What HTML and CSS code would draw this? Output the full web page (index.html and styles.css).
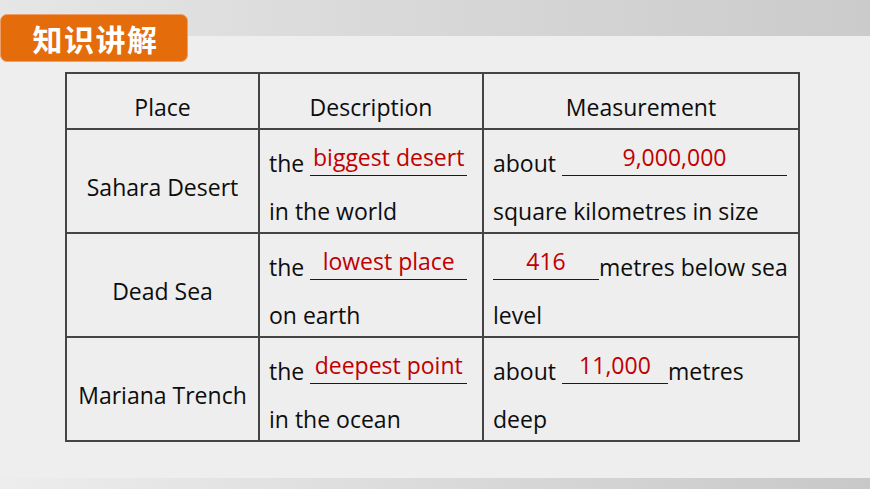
FILE: index.html
```html
<!DOCTYPE html>
<html lang="zh">
<head>
<meta charset="utf-8">
<title>知识讲解</title>
<link rel="stylesheet" href="styles.css">
</head>
<body>
<div class="page">
  <div class="topbar"></div>
  <div class="tab">知识讲解</div>
  <main class="content">
    <table class="grid">
      <colgroup>
        <col class="c1">
        <col class="c2">
        <col class="c3">
      </colgroup>
      <tr class="head">
        <th>Place</th>
        <th>Description</th>
        <th>Measurement</th>
      </tr>
      <tr class="row">
        <td class="place"><div class="cell">Sahara Desert</div></td>
        <td><div class="cell">the <span class="blank w-desc"><span class="ans">biggest desert</span></span><br>in the world</div></td>
        <td><div class="cell">about <span class="blank w-long"><span class="ans">9,000,000</span></span><br>square kilometres in size</div></td>
      </tr>
      <tr class="row">
        <td class="place"><div class="cell">Dead Sea</div></td>
        <td><div class="cell">the <span class="blank w-desc"><span class="ans">lowest place</span></span><br>on earth</div></td>
        <td><div class="cell"><span class="blank w-short"><span class="ans">416</span></span>metres below sea<br>level</div></td>
      </tr>
      <tr class="row">
        <td class="place"><div class="cell">Mariana Trench</div></td>
        <td><div class="cell">the <span class="blank w-desc"><span class="ans">deepest point</span></span><br>in the ocean</div></td>
        <td><div class="cell">about <span class="blank w-short"><span class="ans">11,000</span></span>metres<br>deep</div></td>
      </tr>
    </table>
  </main>
  <div class="bottombar"></div>
</div>
</body>
</html>
```

FILE: styles.css
```css
html, body {
  margin: 0;
  padding: 0;
}
body {
  background: #eeeeee;
  font-family: "Open Sans", "Noto Sans", sans-serif;
  color: #0d0d0d;
}
.page {
  position: relative;
  width: 870px;
  height: 489px;
  display: flex;
  flex-direction: column;
  overflow: hidden;
}
.topbar {
  height: 36px;
  flex: none;
  background: linear-gradient(to right, #e6e6e6 0%, #dadada 40%, #cbcbcb 100%);
}
.tab {
  position: absolute;
  left: 0;
  top: 14px;
  width: 188px;
  height: 48px;
  box-sizing: border-box;
  border-radius: 7px;
  background: #e46c0a;
  border: 1px solid #eea066;
  color: #fff;
  font-family: "Noto Sans CJK SC", "Noto Sans", sans-serif;
  font-weight: 700;
  font-size: 30px;
  letter-spacing: 1.5px;
  padding-left: 3px;
  display: flex;
  align-items: center;
  justify-content: center;
}
.content {
  flex: 1;
  padding: 36px 0 0 65px;
}
.bottombar {
  height: 11px;
  flex: none;
  background: linear-gradient(to right, #ededed 0%, #dedede 40%, #c8c8c8 100%);
}
.grid {
  border-collapse: collapse;
  table-layout: fixed;
  width: 733px;
  font-size: 23px;
}
.c1 { width: 193px; }
.c2 { width: 224px; }
.c3 { width: 316px; }
.grid th, .grid td {
  border: 2px solid #444;
  vertical-align: middle;
  padding: 0 9px;
  text-align: left;
  font-weight: 400;
  white-space: nowrap;
}
.grid th {
  text-align: center;
  padding: 11px 0 0 0;
  line-height: 42px;
}
.grid td.place {
  text-align: center;
  padding: 0;
}
.cell {
  line-height: 48px;
  margin: 8px 0 -4px;
}
.head { height: 56px; }
.row { height: 104px; }
.blank {
  display: inline-block;
  line-height: 24px;
  text-align: center;
  border-bottom: 1.5px solid #1a1a1a;
  vertical-align: baseline;
}
.w-desc { width: 157px; }
.w-long { width: 225px; }
.w-short { width: 106px; }
.ans {
  position: relative;
  top: -6px;
  color: #c00000;
}
```
